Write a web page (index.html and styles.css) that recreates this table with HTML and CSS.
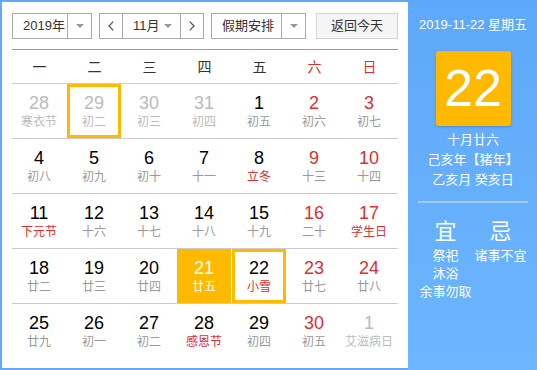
FILE: index.html
```html
<!DOCTYPE html>
<html lang="zh-CN">
<head>
<meta charset="utf-8">
<title>日历</title>
<link rel="stylesheet" href="styles.css">
</head>
<body>
<div class="cal">
  <div class="main">
    <div class="toolbar">
      <div class="sel sel-year"><span class="sel-text">2019年</span><span class="sel-arrow"><i class="tri"></i></span></div>
      <div class="month-group">
        <span class="nav"><svg width="6" height="10" viewBox="0 0 6 10"><polyline points="5.2,0.6 1,5 5.2,9.4" fill="none" stroke="#555" stroke-width="1.3"/></svg></span>
        <span class="sel-month"><span>11月</span><i class="tri"></i></span>
        <span class="nav"><svg width="6" height="10" viewBox="0 0 6 10"><polyline points="0.8,0.6 5,5 0.8,9.4" fill="none" stroke="#555" stroke-width="1.3"/></svg></span>
      </div>
      <div class="sel sel-holiday"><span class="sel-text">假期安排</span><span class="sel-arrow"><i class="tri"></i></span></div>
      <div class="btn-today">返回今天</div>
    </div>
    <div class="week">
      <span>一</span><span>二</span><span>三</span><span>四</span><span>五</span><span class="red">六</span><span class="red">日</span>
    </div>
    <div class="grid">
      <div class="row">
        <div class="cell other"><div class="in"><div class="num">28</div><div class="lunar">寒衣节</div></div></div>
        <div class="cell other"><div class="in boxed"><div class="num">29</div><div class="lunar">初二</div></div></div>
        <div class="cell other"><div class="in"><div class="num">30</div><div class="lunar">初三</div></div></div>
        <div class="cell other"><div class="in"><div class="num">31</div><div class="lunar">初四</div></div></div>
        <div class="cell"><div class="in"><div class="num">1</div><div class="lunar">初五</div></div></div>
        <div class="cell rest"><div class="in"><div class="num">2</div><div class="lunar">初六</div></div></div>
        <div class="cell rest"><div class="in"><div class="num">3</div><div class="lunar">初七</div></div></div>
      </div>
      <div class="row">
        <div class="cell"><div class="in"><div class="num">4</div><div class="lunar">初八</div></div></div>
        <div class="cell"><div class="in"><div class="num">5</div><div class="lunar">初九</div></div></div>
        <div class="cell"><div class="in"><div class="num">6</div><div class="lunar">初十</div></div></div>
        <div class="cell"><div class="in"><div class="num">7</div><div class="lunar">十一</div></div></div>
        <div class="cell"><div class="in"><div class="num">8</div><div class="lunar fest">立冬</div></div></div>
        <div class="cell rest"><div class="in"><div class="num">9</div><div class="lunar">十三</div></div></div>
        <div class="cell rest"><div class="in"><div class="num">10</div><div class="lunar">十四</div></div></div>
      </div>
      <div class="row">
        <div class="cell"><div class="in"><div class="num">11</div><div class="lunar fest">下元节</div></div></div>
        <div class="cell"><div class="in"><div class="num">12</div><div class="lunar">十六</div></div></div>
        <div class="cell"><div class="in"><div class="num">13</div><div class="lunar">十七</div></div></div>
        <div class="cell"><div class="in"><div class="num">14</div><div class="lunar">十八</div></div></div>
        <div class="cell"><div class="in"><div class="num">15</div><div class="lunar">十九</div></div></div>
        <div class="cell rest"><div class="in"><div class="num">16</div><div class="lunar">二十</div></div></div>
        <div class="cell rest"><div class="in"><div class="num">17</div><div class="lunar fest">学生日</div></div></div>
      </div>
      <div class="row">
        <div class="cell"><div class="in"><div class="num">18</div><div class="lunar">廿二</div></div></div>
        <div class="cell"><div class="in"><div class="num">19</div><div class="lunar">廿三</div></div></div>
        <div class="cell"><div class="in"><div class="num">20</div><div class="lunar">廿四</div></div></div>
        <div class="cell today"><div class="in"><div class="num">21</div><div class="lunar">廿五</div></div></div>
        <div class="cell"><div class="in boxed"><div class="num">22</div><div class="lunar fest">小雪</div></div></div>
        <div class="cell rest"><div class="in"><div class="num">23</div><div class="lunar">廿七</div></div></div>
        <div class="cell rest"><div class="in"><div class="num">24</div><div class="lunar">廿八</div></div></div>
      </div>
      <div class="row last">
        <div class="cell"><div class="in"><div class="num">25</div><div class="lunar">廿九</div></div></div>
        <div class="cell"><div class="in"><div class="num">26</div><div class="lunar">初一</div></div></div>
        <div class="cell"><div class="in"><div class="num">27</div><div class="lunar">初二</div></div></div>
        <div class="cell"><div class="in"><div class="num">28</div><div class="lunar fest">感恩节</div></div></div>
        <div class="cell"><div class="in"><div class="num">29</div><div class="lunar">初四</div></div></div>
        <div class="cell rest"><div class="in"><div class="num">30</div><div class="lunar">初五</div></div></div>
        <div class="cell other"><div class="in"><div class="num">1</div><div class="lunar">艾滋病日</div></div></div>
      </div>
    </div>
  </div>
  <div class="side">
    <div class="date-line">2019-11-22 星期五</div>
    <div class="big">22</div>
    <div class="lunar-info">
      <div>十月廿六</div>
      <div>己亥年【猪年】</div>
      <div>乙亥月 癸亥日</div>
    </div>
    <div class="sep"></div>
    <div class="yj">
      <div class="yj-col">
        <div class="yj-title">宜</div>
        <div class="yj-item">祭祀</div>
        <div class="yj-item">沐浴</div>
        <div class="yj-item">余事勿取</div>
      </div>
      <div class="yj-col">
        <div class="yj-title">忌</div>
        <div class="yj-item">诸事不宜</div>
      </div>
    </div>
  </div>
</div>
</body>
</html>
```

FILE: styles.css
```css
* { box-sizing: border-box; }
html, body { margin: 0; padding: 0; background: #fff; }
body {
  font-family: "Liberation Sans", Arial, "Noto Sans CJK SC", sans-serif;
  color: #000;
}
.cal {
  width: 537px;
  height: 370px;
  display: flex;
}
.main {
  width: 408px;
  height: 370px;
  border: 2px solid #62aaf9;
  border-right: 0;
  background: #fff;
  padding: 11px 10px 0 10px;
}
.toolbar {
  display: flex;
  height: 26px;
  margin-bottom: 10px;
  font-size: 13px;
  color: #333;
}
.sel {
  display: flex;
  height: 26px;
  border: 1px solid #aaa;
}
.sel-year { width: 80px; }
.sel-holiday { width: 95px; margin-left: 7px; }
.sel-text {
  flex: 1;
  padding-left: 10px;
  line-height: 24px;
  white-space: nowrap;
}
.sel-arrow {
  width: 24px;
  border-left: 1px solid #aaa;
  display: flex;
  align-items: center;
  justify-content: center;
}
.tri {
  display: block;
  width: 0;
  height: 0;
  border-left: 4px solid transparent;
  border-right: 4px solid transparent;
  border-top: 4px solid #999;
}
.month-group {
  display: flex;
  width: 105px;
  height: 26px;
  margin-left: 7px;
  border: 1px solid #aaa;
}
.nav {
  width: 22px;
  display: flex;
  align-items: center;
  justify-content: center;
}
.sel-month {
  width: 59px;
  border-left: 1px solid #aaa;
  border-right: 1px solid #aaa;
  display: flex;
  align-items: center;
  justify-content: space-between;
  padding: 0 8px 0 10px;
  line-height: 24px;
}
.btn-today {
  margin-left: auto;
  width: 82px;
  height: 26px;
  border: 1px solid #d3d3d3;
  background: #f5f5f5;
  text-align: center;
  line-height: 24px;
}
.week {
  display: grid;
  grid-template-columns: repeat(7, 55px);
  height: 35px;
  border-top: 1px solid #62aaf9;
  border-bottom: 1px solid #ccc;
  padding-top: 2px;
  font-size: 14px;
  line-height: 31px;
  text-align: center;
  color: #333;
}
.red { color: #e02d2d; }
.row {
  display: grid;
  grid-template-columns: repeat(7, 55px);
  height: 55px;
  border-bottom: 1px solid #ccc;
}
.row.last { border-bottom: 0; }
.cell { height: 54px; }
.in {
  width: 54px;
  height: 54px;
  padding-top: 9px;
  text-align: center;
}
.in.boxed {
  border: 3px solid #ffba00;
  padding-top: 6px;
}
.num {
  font-size: 18px;
  line-height: 20px;
  color: #000;
}
.lunar {
  margin-top: 1px;
  font-size: 12px;
  line-height: 16px;
  color: #999;
  white-space: nowrap;
}
.rest .num { color: #e02d2d; }
.lunar.fest { color: #e02d2d; }
.other .num, .other .lunar { color: #bbb; }
.today .in { background: #ffba00; }
.today .num, .today .lunar { color: #fff; }
.side {
  flex: 1;
  height: 370px;
  background: linear-gradient(#5ea8f9, #6db5ff);
  color: #fff;
  padding: 15px 9px 0 10px;
  text-align: center;
}
.date-line {
  font-size: 13px;
  line-height: 20px;
  white-space: nowrap;
}
.big {
  width: 75px;
  height: 75px;
  margin: 16px auto 0;
  background: #ffba00;
  border-radius: 3px;
  box-shadow: 0 1px 3px rgba(0, 0, 0, 0.18);
  font-size: 52px;
  line-height: 75px;
}
.lunar-info {
  margin-top: 4px;
  font-size: 13px;
  line-height: 20px;
  white-space: nowrap;
}
.sep {
  height: 2px;
  margin-top: 11px;
  background: rgba(255, 255, 255, 0.38);
}
.yj {
  display: flex;
  margin-top: 14px;
}
.yj-col { flex: 1; }
.yj-title {
  font-size: 22px;
  line-height: 30px;
}
.yj-item {
  font-size: 13px;
  line-height: 18px;
  white-space: nowrap;
}
```
